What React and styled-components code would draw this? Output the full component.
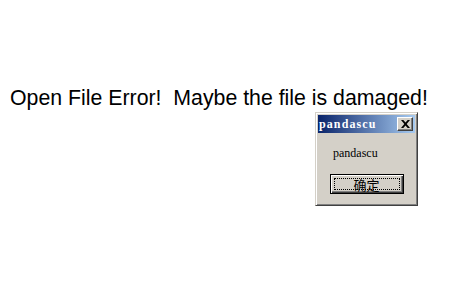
import styled, { createGlobalStyle } from "styled-components";

const GlobalStyle = createGlobalStyle`
  html, body {
    margin: 0;
    padding: 0;
    background: #ffffff;
  }
`;

const Page = styled.div`
  position: relative;
  width: 450px;
  height: 301px;
  background: #ffffff;
  overflow: hidden;
`;

const Message = styled.div`
  padding: 86px 0 0 10px;
  font-family: "Liberation Sans", Arial, sans-serif;
  font-size: 21.3px;
  line-height: 25px;
  color: #000000;
  white-space: pre;
`;

// the little message box lies over the page text
const Dialog = styled.div`
  position: absolute;
  left: 315px;
  top: 112px;
  width: 103px;
  height: 94px;
  box-sizing: border-box;
  background: #d4d0c8;
  border: 1px solid;
  border-color: #d4d0c8 #404040 #404040 #d4d0c8;
  box-shadow: inset 1px 1px 0 #ffffff, inset -1px -1px 0 #808080;
  padding: 2px;
  display: flex;
  flex-direction: column;
`;

const TitleBar = styled.div`
  height: 18px;
  display: flex;
  align-items: center;
  justify-content: space-between;
  padding: 0 2px 0 1px;
  background: linear-gradient(to right, #0a246a, #a6caf0);
`;

const Title = styled.span`
  font-family: "Liberation Serif", "Times New Roman", serif;
  font-weight: bold;
  font-size: 12px;
  letter-spacing: 1.1px;
  color: #ffffff;
`;

const CloseButton = styled.div`
  width: 16px;
  height: 14px;
  box-sizing: border-box;
  background: #d4d0c8;
  border: 1px solid;
  border-color: #ffffff #404040 #404040 #ffffff;
  box-shadow: inset -1px -1px 0 #808080;
  display: flex;
  align-items: center;
  justify-content: center;
`;

const Body = styled.div`
  flex: 1;
  display: flex;
  flex-direction: column;
  align-items: center;
`;

const Text = styled.div`
  margin-top: 13px;
  align-self: flex-start;
  padding-left: 15px;
  font-family: "Liberation Serif", "Times New Roman", serif;
  font-size: 12px;
  color: #000000;
`;

const OkButton = styled.div`
  margin-top: 13px;
  width: 74px;
  height: 20px;
  box-sizing: border-box;
  border: 1px solid #000000;
  background: #d4d0c8;
  box-shadow: inset 1px 1px 0 #ffffff, inset -1px -1px 0 #404040, inset -2px -2px 0 #808080;
  padding: 3px;
  display: flex;
`;

const Focus = styled.div`
  flex: 1;
  border: 1px dotted #000000;
  display: flex;
  align-items: center;
  justify-content: center;
  font-family: "Noto Sans CJK SC", sans-serif;
  font-size: 13px;
  line-height: 1;
  color: #000000;
`;

export default function App() {
  return (
    <Page>
      <GlobalStyle />
      <Message>Open File Error!  Maybe the file is damaged!</Message>
      <Dialog>
        <TitleBar>
          <Title>pandascu</Title>
          <CloseButton>
            <svg width="9" height="8" viewBox="0 0 9 8">
              <path d="M0 0 L2.3 0 L4.5 2.6 L6.7 0 L9 0 L5.7 4 L9 8 L6.7 8 L4.5 5.4 L2.3 8 L0 8 L3.3 4 Z" fill="#000" />
            </svg>
          </CloseButton>
        </TitleBar>
        <Body>
          <Text>pandascu</Text>
          <OkButton>
            <Focus>确定</Focus>
          </OkButton>
        </Body>
      </Dialog>
    </Page>
  );
}
